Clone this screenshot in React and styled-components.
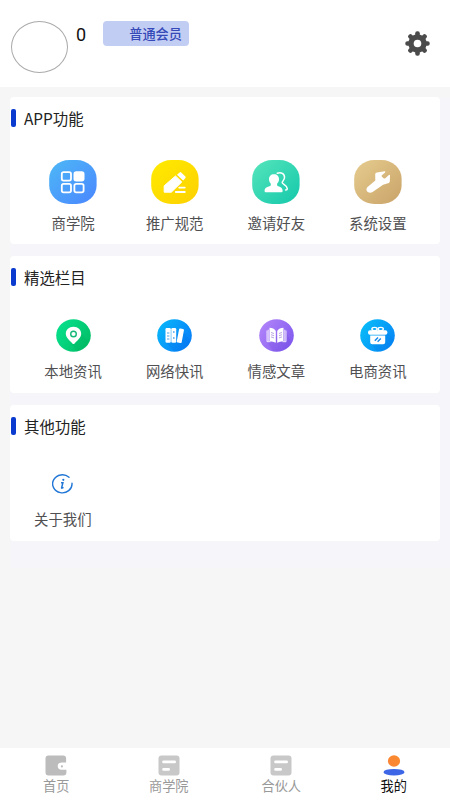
import React from 'react';
import styled, { createGlobalStyle, css } from 'styled-components';

const GlobalStyle = createGlobalStyle`
  * {
    box-sizing: border-box;
  }

  body {
    margin: 0;
    background: #f6f6f6;
    font-family: "Noto Sans CJK SC", "Noto Sans", sans-serif;
  }
`;

const Page = styled.div`
  display: flex;
  flex-direction: column;
  width: 100%;
  height: 100vh;
  overflow: hidden;
`;

const Header = styled.header`
  display: flex;
  align-items: flex-start;
  height: 87px;
  padding: 21px 20px 0 10.5px;
  background: #fff;
`;

const Avatar = styled.div`
  width: 57px;
  height: 52px;
  border: 1px solid #aaa;
  border-radius: 50%;
`;

const Score = styled.span`
  width: 27px;
  margin-left: 8.5px;
  color: #111;
  font-family: Roboto, sans-serif;
  font-size: 18px;
  line-height: 28px;
`;

const Badge = styled.span`
  width: 85.5px;
  height: 25px;
  padding-right: 6.5px;
  border-radius: 4px;
  background: #c2cdf3;
  color: #3549b8;
  font-size: 13.2px;
  font-weight: 500;
  line-height: 25px;
  text-align: right;
`;

const SettingsButton = styled.button`
  display: flex;
  margin: 10px 0 0 auto;
  padding: 0;
  border: none;
  background: none;
`;

const Main = styled.main`
  flex: 1;
  padding: 10px 0 0 10px;
`;

const Sections = styled.div`
  display: flex;
  flex-direction: column;
  gap: 12px;
  padding: 0 10px 27px 0;
  background: #f5f5fa;
`;

const Card = styled.section`
  height: ${(props) => props.$height}px;
  border-radius: 4px;
  background: #fff;
`;

const CardTitle = styled.h2`
  display: flex;
  align-items: center;
  height: 41px;
  margin: 0;
  padding-left: 1px;
  color: #222;
  font-size: 15.4px;
  font-weight: 400;

  &::before {
    content: '';
    width: 4.5px;
    height: 18px;
    margin-right: 8.5px;
    border-radius: 2px;
    background: #0c3bd0;
  }
`;

const Tiles = styled.div`
  display: grid;
  grid-template-columns: ${(props) => (props.$narrow ? '81px' : 'repeat(4, 101.6px)')};
  padding: ${(props) => props.$top}px 12px 0 12.3px;
`;

const Tile = styled.div`
  display: flex;
  flex-direction: column;
  align-items: center;
  color: #505052;
  font-size: 14.4px;
  line-height: 20px;

  > svg {
    margin-bottom: ${(props) => props.$gap}px;
  }
`;

const TabBar = styled.nav`
  display: grid;
  grid-template-columns: repeat(4, 1fr);
  height: 52px;
  background: #fff;
`;

const Tab = styled.div`
  display: flex;
  flex-direction: column;
  align-items: center;
  padding-top: 7px;
  color: #999;
  font-size: 13.2px;
  line-height: 20px;

  ${(props) => props.$active && css`
    color: #111;
  `}
`;

const GearIcon = () => (
  <svg width="25" height="25" viewBox="-12.5 -12.5 25 25">
    {[0, 45, 90, 135].map((angle) => (
      <rect
        key={angle}
        x="-2.3"
        y="-12.2"
        width="4.6"
        height="24.4"
        rx="2"
        fill="#4b4b4b"
        transform={`rotate(${angle})`}
      />
    ))}
    <circle r="9.2" fill="#4b4b4b" />
    <circle r="3.8" fill="#fff" />
  </svg>
);

const Squircle = ({ id, from, to, children }) => (
  <svg width="48" height="44" viewBox="0 0 48 44">
    <defs>
      <linearGradient id={id} x1="0" y1="0" x2="1" y2="1">
        <stop offset="0" stopColor={from} />
        <stop offset="1" stopColor={to} />
      </linearGradient>
    </defs>
    <rect x="0.2" width="47.4" height="44" rx="20" ry="18.5" fill={`url(#${id})`} />
    {children}
  </svg>
);

const Disc = ({ id, from, to, children }) => (
  <svg width="35" height="33" viewBox="0 0 35 33">
    <defs>
      <linearGradient id={id} x1="0" y1="0.2" x2="1" y2="0.8">
        <stop offset="0" stopColor={from} />
        <stop offset="1" stopColor={to} />
      </linearGradient>
    </defs>
    <ellipse cx="17.5" cy="16.5" rx="17.3" ry="16.3" fill={`url(#${id})`} />
    {children}
  </svg>
);

const CollegeIcon = () => (
  <Squircle id="college" from="#4db8f6" to="#4a86ff">
    <g fill="none" stroke="#fff" strokeWidth="1.8">
      <rect x="12.8" y="12.2" width="9.2" height="8.4" rx="1.8" />
      <rect x="25.4" y="12.2" width="9.2" height="8.4" rx="1.8" fill="#fff" />
      <rect x="12.8" y="23.9" width="9.2" height="8.4" rx="1.8" />
      <rect x="25.4" y="23.9" width="9.2" height="8.4" rx="1.8" />
    </g>
  </Squircle>
);

const PromotionIcon = () => (
  <Squircle id="promotion" from="#ffeb00" to="#fdd000">
    <path d="M13.2 32.2v-6.4L24.5 16l6.3 6-10.5 10.2z" fill="#fff" stroke="#fff" strokeLinejoin="round" />
    <path d="M26 14.8l2.6-2.4q.8-.6 1.6.1l4.2 4q.7.8 0 1.5l-2.2 2.4z" fill="#fff" />
    <path d="M28.2 27.6h5.6M24.8 32h9" fill="none" stroke="#fff" strokeWidth="1.8" strokeLinecap="round" />
  </Squircle>
);

const InviteIcon = () => (
  <Squircle id="invite" from="#55e5bb" to="#14c8ab">
    <path
      d="M25.2 13.3c3.8-1.6 7.5.4 7.3 4.2-.1 2.4-1.8 3.4-2.3 4.8-.4 1.8 4.8 2.4 5.1 6.3q0 1.5-1.7 1.3"
      fill="none"
      stroke="#fff"
      strokeWidth="1.5"
      strokeLinecap="round"
    />
    <path
      d="M22 14.2c3.2 0 5.1 2.1 5 5.1-.1 2.2-.9 3.4-1.9 4.4v1.8c2.1 1.4 5.5 1.7 5.5 5v.7q0 1-1.1 1H13.7q-1.1 0-1.1-1v-.7c0-3.3 4.1-3.6 6.2-5v-1.8c-1-1-1.7-2.2-1.8-4.4-.1-3 1.8-5.1 5-5.1z"
      fill="#fff"
    />
  </Squircle>
);

const WrenchIcon = () => (
  <Squircle id="wrench" from="#e6cc8e" to="#c9a369">
    <path
      d="M23 12.4l7.6-1.2q1.3.1.5 1.2l-3.2 2.9q-.7.8 0 1.5l1.7 1.5q.8.6 1.7 0l3.6-3.2q1-.7 1.1.5l-.2 6q-.1 1-1 1.3l-5.7 1.9-10.5 7.1c-3.6 2.3-8-1.2-5.3-4.7l8-6.6-.1-6.7q.2-1.4 1.8-1.5z"
      fill="#fff"
    />
  </Squircle>
);

const LocationIcon = () => (
  <Disc id="location" from="#08e18d" to="#02bd65">
    <path d="M24 13l8.2 9.8c-2.2 5-6.5 8.5-11 9.8L15 24z" fill="#00aa58" opacity=".2" />
    <path d="M17.5 7.8c4.5 0 7.7 2.9 7.7 7 0 4.3-4.7 7.4-6.6 9.6q-1.1 1.1-2.2 0c-1.9-2.2-6.6-5.3-6.6-9.6 0-4.1 3.2-7 7.7-7z" fill="#fff" />
    <circle cx="17.5" cy="15" r="2.8" fill="none" stroke="#16b878" strokeWidth="1.4" />
  </Disc>
);

const BooksIcon = () => (
  <Disc id="books" from="#08b6fa" to="#087cf8">
    <path d="M8.2 23l8.5 8.8c7.5.6 14-3.2 16.6-9.5L26 11z" fill="#0069e2" opacity=".2" />
    <g fill="#fff">
      <rect x="8.5" y="9" width="5.3" height="14.8" rx="1.2" />
      <rect x="14.3" y="9" width="4.9" height="14.8" rx="1.2" />
      <rect x="20.8" y="9.5" width="5" height="14.4" rx="1.2" transform="rotate(11 23 17)" />
    </g>
    <g stroke="#4ba3ea" fill="none">
      <path d="M10 14h2.4M10 17h2.4M10 20h2.4" />
      <path d="M16 13h1.6M16 19h1.6" strokeWidth="1.6" />
    </g>
  </Disc>
);

const StoriesIcon = () => (
  <Disc id="stories" from="#b184f9" to="#8059ef">
    <path d="M8 23l6 9c8 2 15-2 18-8.5L26.5 12z" fill="#6c43d4" opacity=".18" />
    <g fill="#fff">
      <path d="M16.8 12v11.8q-2.5-1.6-6.3-1.6V8.8q4.2 0 6.3 3.2z" />
      <path d="M18.2 12v11.8q2.5-1.6 6.3-1.6V8.8q-4.2 0-6.3 3.2z" />
    </g>
    <path d="M9.2 10.7v11.6M25.8 10.7v11.6M8 11.5v11.2h3.5M27 11.5v11.2h-3.5" fill="none" stroke="#f0e8ff" strokeWidth="1" />
    <path d="M12 13.5l3 1M12 15.7l3 1M12 17.9l3 1M23 13.5l-3 1M23 15.7l-3 1M23 17.9l-3 1" stroke="#b39ae0" strokeWidth=".9" />
  </Disc>
);

const ShopIcon = () => (
  <Disc id="shop" from="#08bdf8" to="#0784f6">
    <path d="M26 12l7.6 8.5c-2.3 7.5-9.6 12-17 11.2L10 23z" fill="#0073df" opacity=".18" />
    <g fill="none" stroke="#fff" strokeWidth="1.4">
      <ellipse cx="14.5" cy="10.1" rx="2.6" ry="1.7" />
      <ellipse cx="20.7" cy="10.1" rx="2.6" ry="1.7" />
    </g>
    <rect x="8" y="11.2" width="19.4" height="4.5" rx="2" fill="#fff" />
    <path d="M10.2 16.6h15v6.6q0 2-2 2h-11q-2 0-2-2z" fill="#fff" />
    <path d="M14.8 21.8l3.2-3.4M17.6 22.8l3.2-3.4" stroke="#1389ea" strokeWidth="1.4" />
  </Disc>
);

const InfoIcon = () => (
  <svg width="21" height="20" viewBox="0 0 21 20">
    <path d="M17 3.3A9.7 9 0 1 0 20 9.2" fill="none" stroke="#2176d6" strokeWidth="1.4" strokeLinecap="round" />
    <circle cx="11.3" cy="5.8" r="1.1" fill="#2176d6" />
    <path d="M9 8.8h1.9l-1.3 5.1q0 .7 1.9-.5" fill="none" stroke="#2176d6" strokeWidth="1.5" />
  </svg>
);

const WalletIcon = () => (
  <svg width="22" height="21" viewBox="0 0 22 21">
    <path
      d="M3.5.4h14.6q3 0 3 3v4.1h-4.4q-4 0-4 3.6t4 3.6h4.7v2.7q0 3-3 3H3.5q-3 0-3-3v-14q0-3 3-3z"
      fill="#bcbcbc"
    />
    <circle cx="16.9" cy="11.4" r="1.1" fill="#bcbcbc" />
  </svg>
);

const DocumentIcon = () => (
  <svg width="22" height="21" viewBox="0 0 22 21">
    <rect x=".5" y=".4" width="21" height="20" rx="3" fill="#c8c8c8" />
    <path d="M5.5 6.9h11.2M5.5 14.4h5.2" stroke="#fff" strokeWidth="2.6" strokeLinecap="round" />
  </svg>
);

const ProfileIcon = () => (
  <svg width="22" height="21" viewBox="0 0 22 21">
    <defs>
      <linearGradient id="head" x1="1" y1="0" x2="0" y2="1">
        <stop offset="0" stopColor="#f98a2c" />
        <stop offset="1" stopColor="#fb8438" />
      </linearGradient>
    </defs>
    <ellipse cx="11" cy="6" rx="6.1" ry="5.7" fill="url(#head)" />
    <ellipse cx="11" cy="17.2" rx="10.5" ry="3.3" fill="#3c66e6" />
  </svg>
);

const sections = [
  {
    title: 'APP功能',
    height: 147,
    top: 22,
    gap: 8.5,
    items: [
      { label: '商学院', Icon: CollegeIcon },
      { label: '推广规范', Icon: PromotionIcon },
      { label: '邀请好友', Icon: InviteIcon },
      { label: '系统设置', Icon: WrenchIcon },
    ],
  },
  {
    title: '精选栏目',
    height: 137,
    top: 22,
    gap: 8.5,
    items: [
      { label: '本地资讯', Icon: LocationIcon },
      { label: '网络快讯', Icon: BooksIcon },
      { label: '情感文章', Icon: StoriesIcon },
      { label: '电商资讯', Icon: ShopIcon },
    ],
  },
  {
    title: '其他功能',
    height: 136,
    top: 28,
    gap: 14.5,
    narrow: true,
    items: [{ label: '关于我们', Icon: InfoIcon }],
  },
];

const tabs = [
  { label: '首页', Icon: WalletIcon },
  { label: '商学院', Icon: DocumentIcon },
  { label: '合伙人', Icon: DocumentIcon },
  { label: '我的', Icon: ProfileIcon, active: true },
];

const App = () => (
  <>
    <GlobalStyle />
    <Page>
      <Header>
        <Avatar />
        <Score>0</Score>
        <Badge>普通会员</Badge>
        <SettingsButton><GearIcon /></SettingsButton>
      </Header>
      <Main>
        <Sections>
          {sections.map(({ title, height, top, gap, narrow, items }) => (
            <Card key={title} $height={height}>
              <CardTitle>{title}</CardTitle>
              <Tiles $top={top} $narrow={narrow}>
                {items.map(({ label, Icon }) => (
                  <Tile key={label} $gap={gap}>
                    <Icon />
                    {label}
                  </Tile>
                ))}
              </Tiles>
            </Card>
          ))}
        </Sections>
      </Main>
      <TabBar>
        {tabs.map(({ label, Icon, active }) => (
          <Tab key={label} $active={active}>
            <Icon />
            {label}
          </Tab>
        ))}
      </TabBar>
    </Page>
  </>
);

export default App;
